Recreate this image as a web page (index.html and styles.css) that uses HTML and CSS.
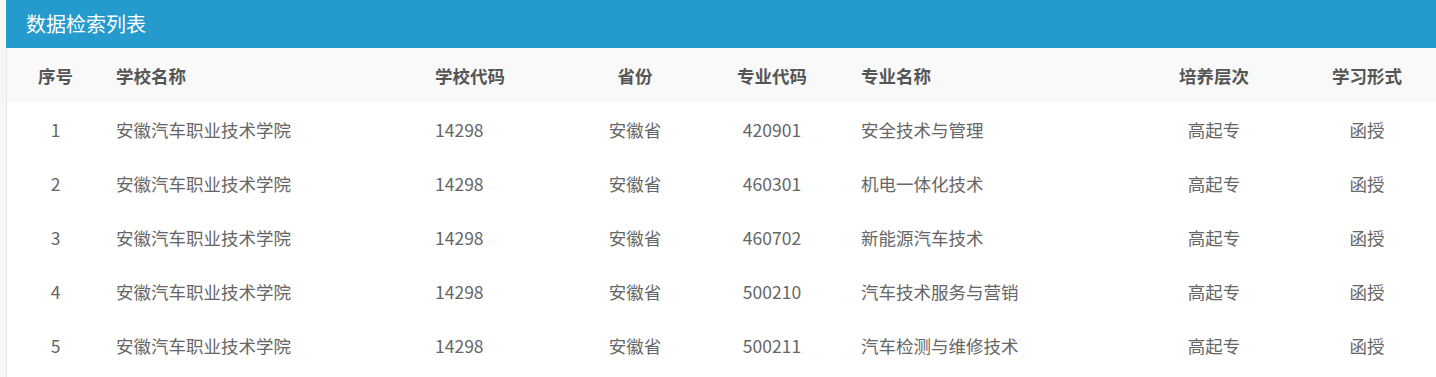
FILE: index.html
```html
<!DOCTYPE html>
<html lang="zh-CN">
<head>
<meta charset="utf-8">
<title>数据检索列表</title>
<link rel="stylesheet" href="styles.css">
</head>
<body>
<div class="panel">
  <div class="panel-title">数据检索列表</div>
  <table class="grid">
    <colgroup>
      <col class="c1"><col class="c2"><col class="c3"><col class="c4"><col class="c5"><col class="c6"><col class="c7"><col class="c8">
    </colgroup>
    <thead>
      <tr>
        <th class="center">序号</th>
        <th class="left">学校名称</th>
        <th class="left">学校代码</th>
        <th class="center">省份</th>
        <th class="center">专业代码</th>
        <th class="left">专业名称</th>
        <th class="center">培养层次</th>
        <th class="center">学习形式</th>
      </tr>
    </thead>
    <tbody>
      <tr><td class="center">1</td><td class="left">安徽汽车职业技术学院</td><td class="left">14298</td><td class="center">安徽省</td><td class="center">420901</td><td class="left">安全技术与管理</td><td class="center">高起专</td><td class="center">函授</td></tr>
      <tr><td class="center">2</td><td class="left">安徽汽车职业技术学院</td><td class="left">14298</td><td class="center">安徽省</td><td class="center">460301</td><td class="left">机电一体化技术</td><td class="center">高起专</td><td class="center">函授</td></tr>
      <tr><td class="center">3</td><td class="left">安徽汽车职业技术学院</td><td class="left">14298</td><td class="center">安徽省</td><td class="center">460702</td><td class="left">新能源汽车技术</td><td class="center">高起专</td><td class="center">函授</td></tr>
      <tr><td class="center">4</td><td class="left">安徽汽车职业技术学院</td><td class="left">14298</td><td class="center">安徽省</td><td class="center">500210</td><td class="left">汽车技术服务与营销</td><td class="center">高起专</td><td class="center">函授</td></tr>
      <tr><td class="center">5</td><td class="left">安徽汽车职业技术学院</td><td class="left">14298</td><td class="center">安徽省</td><td class="center">500211</td><td class="left">汽车检测与维修技术</td><td class="center">高起专</td><td class="center">函授</td></tr>
    </tbody>
  </table>
</div>
</body>
</html>
```

FILE: styles.css
```css
html, body {
  margin: 0;
  padding: 0;
}
body {
  background: #f6f6f6;
  padding-left: 6px;
  font-family: "Noto Sans CJK SC", "Noto Sans", sans-serif;
}
.panel {
  background: #ffffff;
  min-height: 100vh;
  border-left: 1px solid #e6e6e6;
  box-sizing: border-box;
}
.panel-title {
  height: 48px;
  line-height: 48px;
  margin-left: -1px;
  background: #259bcd;
  color: #ffffff;
  font-size: 20px;
  padding-left: 20px;
}
.grid {
  width: 1429px;
  table-layout: fixed;
  border-collapse: collapse;
  font-size: 17.5px;
}
.c1 { width: 97px; }
.c2 { width: 319px; }
.c3 { width: 152px; }
.c4 { width: 120px; }
.c5 { width: 154px; }
.c6 { width: 281px; }
.c7 { width: 168px; }
.c8 { width: 138px; }
.grid th {
  height: 54px;
  background: #f9f9f9;
  color: #555555;
  font-weight: bold;
  padding: 0 12px;
  white-space: nowrap;
}
.grid td {
  height: 54px;
  color: #666666;
  padding: 0 12px;
  white-space: nowrap;
}
.grid .center { text-align: center; }
.grid .left { text-align: left; }
```
